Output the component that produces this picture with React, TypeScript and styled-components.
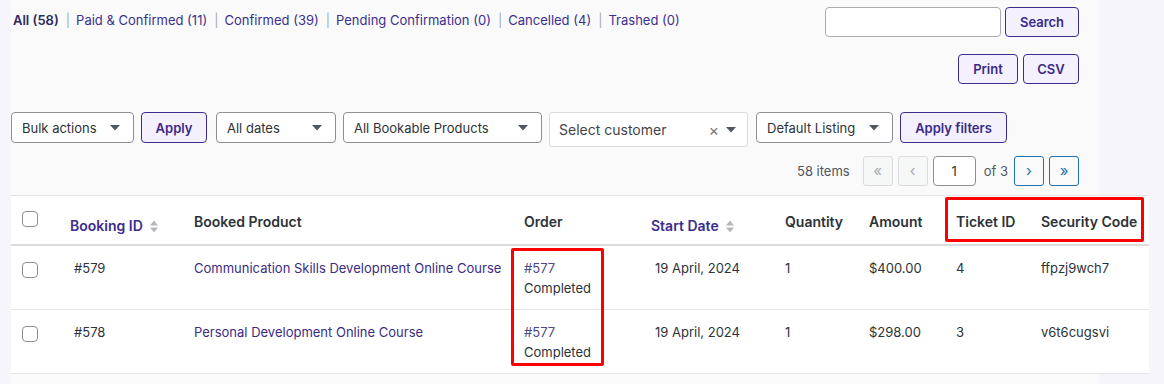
import styled, { createGlobalStyle } from "styled-components";

const GlobalStyle = createGlobalStyle`
  body {
    margin: 0;
    background: #f6f5fc;
    font-family: Inter, "Noto Sans", sans-serif;
    color: #2c3338;
  }
`;

const statuses = [
  { label: "All", count: 58, current: true },
  { label: "Paid & Confirmed", count: 11 },
  { label: "Confirmed", count: 39 },
  { label: "Pending Confirmation", count: 0 },
  { label: "Cancelled", count: 4 },
  { label: "Trashed", count: 0 },
];

const rows = [
  {
    id: "#579",
    product: "Communication Skills Development Online Course",
    order: "#577",
    status: "Completed",
    date: "19 April, 2024",
    qty: 1,
    amount: "$400.00",
    ticket: 4,
    code: "ffpzj9wch7",
  },
  {
    id: "#578",
    product: "Personal Development Online Course",
    order: "#577",
    status: "Completed",
    date: "19 April, 2024",
    qty: 1,
    amount: "$298.00",
    ticket: 3,
    code: "v6t6cugsvi",
  },
];

function SortIcon() {
  return (
    <svg width="10" height="15" viewBox="0 0 10 15">
      <path d="M1 6.5 L5 1.5 L9 6.5 Z" fill="#b4b6bb" />
      <path d="M1 8.5 L5 13.5 L9 8.5 Z" fill="#b4b6bb" />
    </svg>
  );
}

function Caret() {
  return (
    <svg width="10" height="6" viewBox="0 0 10 6">
      <path d="M0 0 L10 0 L5 5.5 Z" fill="#50575e" />
    </svg>
  );
}

export default function App() {
  return (
    <>
      <GlobalStyle />
      <Page>
        <TopRow>
          <StatusList>
            {statuses.map((s, i) => (
              <li key={s.label}>
                <StatusLink $current={s.current}>
                  {s.label} ({s.count})
                </StatusLink>
                {i < statuses.length - 1 && <Sep>|</Sep>}
              </li>
            ))}
          </StatusList>
          <SearchBox>
            <SearchInput type="search" />
            <Button>Search</Button>
          </SearchBox>
        </TopRow>

        <ExportRow>
          <Button $width={60}>Print</Button>
          <Button $width={56}>CSV</Button>
        </ExportRow>

        <FilterRow>
          <Select $width={123}>
            Bulk actions <Caret />
          </Select>
          <Button $width={66} $height={31}>
            Apply
          </Button>
          <Select $width={120} $ml={2}>
            All dates <Caret />
          </Select>
          <Select $width={199}>
            All Bookable Products <Caret />
          </Select>
          <CustomerSelect>
            <span>Select customer</span>
            <ClearCaret>
              <Clear>×</Clear>
              <Caret />
            </ClearCaret>
          </CustomerSelect>
          <Select $width={137} $ml={1}>
            Default Listing <Caret />
          </Select>
          <Button $width={107} $height={31}>
            Apply filters
          </Button>
        </FilterRow>

        <PagerRow>
          <ItemCount>58 items</ItemCount>
          <PageButton $disabled>«</PageButton>
          <PageButton $disabled>‹</PageButton>
          <PageInput>1</PageInput>
          <PageOf>of 3</PageOf>
          <PageButton>›</PageButton>
          <PageButton>»</PageButton>
        </PagerRow>

        <TableWrap>
          <Table>
            <colgroup>
              <col style={{ width: 49 }} />
              <col style={{ width: 124 }} />
              <col style={{ width: 330 }} />
              <col style={{ width: 127 }} />
              <col style={{ width: 134 }} />
              <col style={{ width: 84 }} />
              <col style={{ width: 87 }} />
              <col style={{ width: 85 }} />
              <col style={{ width: 118 }} />
            </colgroup>
            <thead>
              <tr>
                <Th $check>
                  <Checkbox />
                </Th>
                <Th $sortable>
                  <SortLabel>
                    Booking ID <SortIcon />
                  </SortLabel>
                </Th>
                <Th>Booked Product</Th>
                <Th>Order</Th>
                <Th $sortable>
                  <SortLabel>
                    Start Date <SortIcon />
                  </SortLabel>
                </Th>
                <Th>Quantity</Th>
                <Th>Amount</Th>
                <Th>Ticket ID</Th>
                <Th>Security Code</Th>
              </tr>
            </thead>
            <tbody>
              {rows.map((r) => (
                <tr key={r.id}>
                  <Td $check>
                    <Checkbox />
                  </Td>
                  <Td $indent>{r.id}</Td>
                  <Td>
                    <Link>{r.product}</Link>
                  </Td>
                  <Td>
                    <Link $muted>{r.order}</Link>
                    <br />
                    {r.status}
                  </Td>
                  <Td $indent>{r.date}</Td>
                  <Td>{r.qty}</Td>
                  <Td>{r.amount}</Td>
                  <Td>{r.ticket}</Td>
                  <Td>{r.code}</Td>
                </tr>
              ))}
            </tbody>
          </Table>
          <Highlight style={{ left: 934, top: 2, width: 199, height: 45 }} />
          <Highlight style={{ left: 500, top: 53, width: 93, height: 118 }} />
        </TableWrap>
      </Page>
    </>
  );
}

const Page = styled.div`
  margin-left: 11px;
  width: 1088px;
  min-height: 384px;
  background: #fafafa;
  box-sizing: border-box;
  padding: 7px 20px 0 0;
`;

const TopRow = styled.div`
  display: flex;
  justify-content: space-between;
  align-items: flex-start;
`;

const StatusList = styled.ul`
  list-style: none;
  margin: 3px 0 0 2px;
  padding: 0;
  display: flex;
  font-size: 13px;
  line-height: 20px;

  li {
    display: flex;
  }
`;

const StatusLink = styled.a<{ $current?: boolean }>`
  color: ${(p) => (p.$current ? "#2b2a5e" : "#3c2f8f")};
  font-weight: ${(p) => (p.$current ? 600 : 400)};
  text-decoration: none;
`;

const Sep = styled.span`
  color: #a7aaad;
  margin: 0 6px 0 7px;
`;

const SearchBox = styled.div`
  display: flex;
  gap: 4px;
`;

const SearchInput = styled.input`
  width: 176px;
  height: 30px;
  box-sizing: border-box;
  border: 1px solid #a9acb0;
  border-radius: 4px;
  background: #fff;
  margin: 0;
`;

const Button = styled.button<{ $width?: number; $height?: number }>`
  width: ${(p) => p.$width ?? 74}px;
  height: ${(p) => p.$height ?? 30}px;
  box-sizing: border-box;
  border: 1px solid #3f2a8e;
  border-radius: 4px;
  background: #f4f0fd;
  color: #3a2a86;
  font-family: inherit;
  font-size: 13px;
  font-weight: 600;
  padding: 0;
  margin: 0;
`;

const ExportRow = styled.div`
  display: flex;
  justify-content: flex-end;
  gap: 5px;
  margin-top: 17px;
`;

const FilterRow = styled.div`
  display: flex;
  align-items: flex-start;
  gap: 7px;
  margin-top: 28px;
`;

const Select = styled.div<{ $width: number; $ml?: number }>`
  width: ${(p) => p.$width}px;
  height: 31px;
  margin-left: ${(p) => p.$ml ?? 0}px;
  box-sizing: border-box;
  border: 1px solid #8c8f94;
  border-radius: 4px;
  background: #fff;
  display: flex;
  align-items: center;
  justify-content: space-between;
  padding: 0 13px 0 10px;
  font-size: 13px;
  color: #2c3338;
`;

const CustomerSelect = styled.div`
  width: 199px;
  height: 35px;
  box-sizing: border-box;
  border: 1px solid #dcdcde;
  border-radius: 3px;
  background: #fff;
  display: flex;
  align-items: center;
  justify-content: space-between;
  padding: 0 11px 0 9px;
  font-size: 14px;
  color: #444;
`;

const ClearCaret = styled.span`
  display: flex;
  align-items: center;
  gap: 7px;
`;

const Clear = styled.span`
  font-size: 16px;
  color: #777;
  line-height: 1;
`;

const PagerRow = styled.div`
  display: flex;
  justify-content: flex-end;
  align-items: center;
  gap: 5px;
  margin-top: 9px;
`;

const ItemCount = styled.span`
  font-size: 13px;
  color: #50575e;
  margin-right: 8px;
`;

const PageButton = styled.span<{ $disabled?: boolean }>`
  width: 30px;
  height: 30px;
  box-sizing: border-box;
  display: inline-flex;
  align-items: center;
  justify-content: center;
  border-radius: 3px;
  border: 1px solid ${(p) => (p.$disabled ? "#dcdcde" : "#2271b1")};
  background: ${(p) => (p.$disabled ? "#f6f7f7" : "#fafafa")};
  color: ${(p) => (p.$disabled ? "#a7aaad" : "#2271b1")};
  font-size: 15px;
  padding-bottom: 2px;
`;

const PageInput = styled.span`
  width: 43px;
  height: 30px;
  box-sizing: border-box;
  display: inline-flex;
  align-items: center;
  justify-content: center;
  border: 1px solid #8c8f94;
  border-radius: 4px;
  background: #fff;
  font-size: 13px;
  color: #2c3338;
`;

const PageOf = styled.span`
  font-size: 13px;
  color: #50575e;
  margin: 0 1px 0 3px;
`;

const TableWrap = styled.div`
  position: relative;
  width: 1138px;
  margin-top: 9px;
  background: #fff;
`;

const Table = styled.table`
  width: 1138px;
  table-layout: fixed;
  border-collapse: collapse;
  border-top: 1px solid #e4e4e7;
`;

const Th = styled.th<{ $sortable?: boolean; $check?: boolean }>`
  text-align: left;
  vertical-align: top;
  font-size: 14px;
  font-weight: 600;
  color: #2c3338;
  line-height: 20px;
  padding: ${(p) =>
    p.$check ? "15px 0 0 11px" : p.$sortable ? "20px 10px 0" : "16px 10px 0"};
  height: 28px;
  border-bottom: 2px solid #dcdcde;
  white-space: nowrap;
`;

const SortLabel = styled.span`
  display: inline-flex;
  align-items: center;
  gap: 6px;
  color: #3b2c8e;
`;

const Td = styled.td<{ $check?: boolean; $indent?: boolean }>`
  vertical-align: top;
  font-size: 13px;
  line-height: 20px;
  color: #2c3338;
  padding: ${(p) =>
    p.$check ? "16px 0 0 11px" : p.$indent ? "12px 10px 11px 14px" : "12px 10px 11px"};
  height: 40px;
  border-bottom: 1px solid #e5e5e5;
  white-space: nowrap;
`;

const Link = styled.a<{ $muted?: boolean }>`
  color: ${(p) => (p.$muted ? "#4f4a86" : "#3b2c85")};
  text-decoration: none;
`;

const Checkbox = styled.span`
  display: block;
  width: 16px;
  height: 16px;
  box-sizing: border-box;
  border: 1px solid #8c8f94;
  border-radius: 4px;
  background: #fff;
`;

const Highlight = styled.div`
  position: absolute;
  box-sizing: border-box;
  border: 3px solid #f00;
  border-radius: 2px;
  pointer-events: none;
`;
